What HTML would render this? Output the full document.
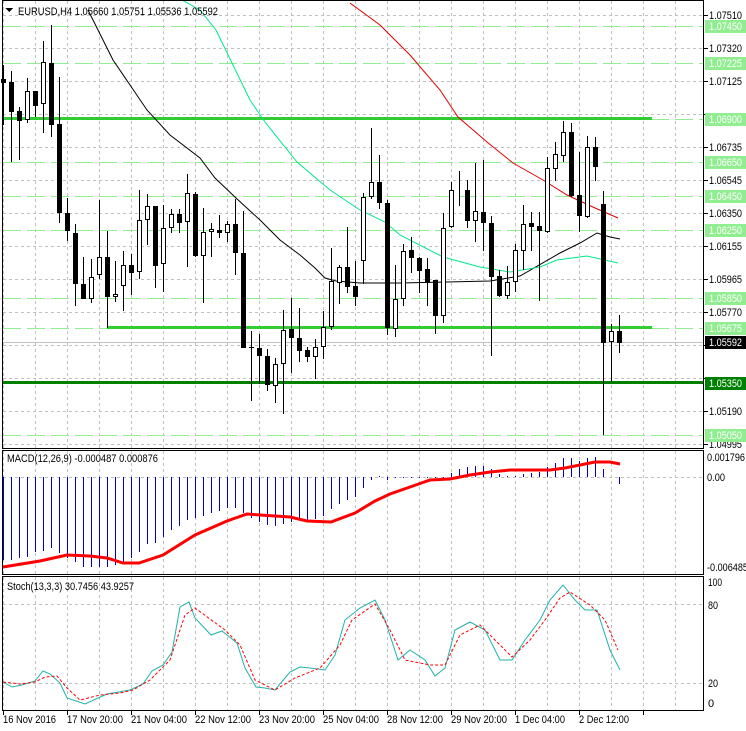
<!DOCTYPE html>
<html><head><meta charset="utf-8">
<style>
html,body{margin:0;padding:0;background:#fff;}
body{width:746px;height:731px;overflow:hidden;}
svg{display:block;}
text{font-family:"Liberation Sans","DejaVu Sans",sans-serif;font-size:11px;fill:#000;}
</style></head><body>
<svg id="s" width="746" height="731" viewBox="0 0 746 731" xmlns="http://www.w3.org/2000/svg" shape-rendering="crispEdges">
<g id="grid"></g>
<g id="lv"></g>
<g id="ma" shape-rendering="auto" fill="none">
<polyline stroke="#000" stroke-width="1" points="88,10 113,60 130,85 147,110 170,135 200,158 215,178 236,198 260,220 280,240 300,255 315,268 325,278 336,281 360,283 400,283 447,282 490,281 520,276 560,253 580,243 597,233 610,237 620,239"/>
<polyline stroke="#00e88a" stroke-width="1" points="182,0 200,10 216,30 250,100 265,122 297,162 330,190 360,210 385,222 400,235 443,257 480,267 510,272 540,267 557,260 587,256 618,263"/>
<polyline stroke="#e00000" stroke-width="1" points="350,3 380,25 410,55 440,90 458,117 487,142 513,163 543,180 567,195 595,208 618,218"/>
</g>
<g id="cd"></g>
<g id="mc"></g>
<g shape-rendering="auto" fill="none">
<polyline stroke="#ff0000" stroke-width="3" points="3,567 40,561 67,555 90,556 107,558 123,563 139,563 163,555 195,535 227,521 247,514 260,515 290,517 307,521 331,522 355,513 375,501 390,494 410,487 430,480 450,479 470,475 490,472 510,470 550,470 565,468 580,465 595,462 610,462 620,464"/>
<polyline stroke="#20b2aa" stroke-width="1" points="3,682 12,687 22,685 35,681 43,671 50,674 60,683 67,698 85,704 107,694 130,690 143,684 152,671 163,665 172,652 180,607 189,602 195,618 211,635 222,631 237,643 245,668 256,687 265,688 275,690 290,672 300,667 310,668 325,670 335,655 345,620 360,608 375,600 385,620 398,660 410,650 425,660 435,676 445,668 455,630 470,622 485,630 500,660 512,660 525,640 540,620 550,600 563,585 575,600 585,610 597,610 610,650 620,670"/>
<polyline stroke="#ff0000" stroke-width="1" stroke-dasharray="3,2" points="3,682 20,684 35,682 45,677 57,676 67,688 80,700 100,695 120,693 133,690 150,680 170,660 185,615 195,608 225,630 240,645 255,680 275,690 295,678 320,668 340,645 352,620 375,604 390,630 405,660 430,665 445,665 460,635 480,625 500,645 512,657 530,640 545,620 560,598 570,592 590,605 605,620 618,650"/>
</g>
<g fill="none" stroke="#000" stroke-width="1">
<rect x="2.5" y="0.5" width="701" height="448"/>
<rect x="2.5" y="450.5" width="701" height="124"/>
<rect x="2.5" y="576.5" width="701" height="134"/>
</g>
<g id="ax"></g>
<path d="M5,8 L13,8 L9,12 Z" fill="#000"/>
<text x="18" y="15" textLength="200" lengthAdjust="spacingAndGlyphs">EURUSD,H4  1.05660 1.05751 1.05536 1.05592</text>
<text x="7" y="462" textLength="151" lengthAdjust="spacingAndGlyphs">MACD(12,26,9) -0.000487 0.000876</text>
<text x="7" y="590" textLength="127" lengthAdjust="spacingAndGlyphs">Stoch(13,3,3) 30.7456 43.9257</text>
<g>
<text x="707" y="461" textLength="38" lengthAdjust="spacingAndGlyphs">0.001796</text>
<text x="707" y="481" textLength="18" lengthAdjust="spacingAndGlyphs">0.00</text>
<text x="707" y="571" textLength="41" lengthAdjust="spacingAndGlyphs">-0.006485</text>
<text x="708" y="586" textLength="14" lengthAdjust="spacingAndGlyphs">100</text>
<text x="708" y="609" textLength="10" lengthAdjust="spacingAndGlyphs">80</text>
<text x="708" y="687" textLength="10" lengthAdjust="spacingAndGlyphs">20</text>
<text x="708" y="707">0</text>
<text x="3" y="723" textLength="53" lengthAdjust="spacingAndGlyphs">16 Nov 2016</text>
<text x="67" y="723" textLength="56" lengthAdjust="spacingAndGlyphs">17 Nov 20:00</text>
<text x="131" y="723" textLength="56" lengthAdjust="spacingAndGlyphs">21 Nov 04:00</text>
<text x="195" y="723" textLength="56" lengthAdjust="spacingAndGlyphs">22 Nov 12:00</text>
<text x="259" y="723" textLength="56" lengthAdjust="spacingAndGlyphs">23 Nov 20:00</text>
<text x="323" y="723" textLength="56" lengthAdjust="spacingAndGlyphs">25 Nov 04:00</text>
<text x="387" y="723" textLength="56" lengthAdjust="spacingAndGlyphs">28 Nov 12:00</text>
<text x="451" y="723" textLength="56" lengthAdjust="spacingAndGlyphs">29 Nov 20:00</text>
<text x="515" y="723" textLength="50" lengthAdjust="spacingAndGlyphs">1 Dec 04:00</text>
<text x="579" y="723" textLength="50" lengthAdjust="spacingAndGlyphs">2 Dec 12:00</text>
</g>
<g id="plbl">
<text x="709" y="19" textLength="33" lengthAdjust="spacingAndGlyphs">1.07510</text>
<text x="709" y="52" textLength="33" lengthAdjust="spacingAndGlyphs">1.07320</text>
<text x="709" y="85" textLength="33" lengthAdjust="spacingAndGlyphs">1.07125</text>
<text x="709" y="151" textLength="33" lengthAdjust="spacingAndGlyphs">1.06735</text>
<text x="709" y="184" textLength="33" lengthAdjust="spacingAndGlyphs">1.06545</text>
<text x="709" y="217" textLength="33" lengthAdjust="spacingAndGlyphs">1.06350</text>
<text x="709" y="250" textLength="33" lengthAdjust="spacingAndGlyphs">1.06155</text>
<text x="709" y="283" textLength="33" lengthAdjust="spacingAndGlyphs">1.05965</text>
<text x="709" y="316" textLength="33" lengthAdjust="spacingAndGlyphs">1.05770</text>
<text x="709" y="415" textLength="33" lengthAdjust="spacingAndGlyphs">1.05190</text>
<text x="709" y="448" textLength="33" lengthAdjust="spacingAndGlyphs">1.04995</text>
</g>
<g id="tags"></g>
</svg>
<script>
var NS="http://www.w3.org/2000/svg";
function el(p,t,a,txt){var e=document.createElementNS(NS,t);for(var k in a)e.setAttribute(k,a[k]);if(txt!==undefined)e.textContent=txt;document.getElementById(p).appendChild(e);return e;}
for(var k=0;k<14;k++){var y=15+33*k+0.5;el("grid","line",{x1:3,x2:703,y1:y,y2:y,stroke:"#c0c0c0","stroke-dasharray":"3,3"});}
for(var k=0;k<22;k++){var x=3+32*k+0.5;
 el("grid","line",{x1:x,x2:x,y1:1,y2:448,stroke:"#c0c0c0","stroke-dasharray":"3,3"});
 el("grid","line",{x1:x,x2:x,y1:451,y2:574,stroke:"#c0c0c0","stroke-dasharray":"3,3"});
 el("grid","line",{x1:x,x2:x,y1:577,y2:710,stroke:"#c0c0c0","stroke-dasharray":"3,3"});
 if(k%2==0)el("grid","line",{x1:x,x2:x,y1:711,y2:715,stroke:"#000"});
}
el("grid","line",{x1:3,x2:703,y1:477.5,y2:477.5,stroke:"#c0c0c0","stroke-dasharray":"3,3"});
el("grid","line",{x1:3,x2:703,y1:604.5,y2:604.5,stroke:"#c0c0c0","stroke-dasharray":"3,3"});
el("grid","line",{x1:3,x2:703,y1:683.5,y2:683.5,stroke:"#c0c0c0","stroke-dasharray":"3,3"});
[26,63,162,196,230,298,328,435,119].forEach(function(y){el("lv","line",{x1:3,x2:703,y1:y+0.5,y2:y+0.5,stroke:"#90ee90","stroke-dasharray":"18,6"});});
el("lv","line",{x1:3,x2:703,y1:342.5,y2:342.5,stroke:"#c0c0c0"});
el("lv","rect",{x:3,y:117,width:649,height:3,fill:"#32cd32"});
el("lv","rect",{x:107,y:326,width:545,height:3,fill:"#32cd32"});
el("lv","rect",{x:3,y:381,width:700,height:3,fill:"#008000"});
var C=[[65,125,79,83,0],[71,162,82,112,0],[107,160,111,121,0],[78,123,91,120,1],[91,117,91,106,0],[41,133,62,104,1],[25,137,63,125,0],[77,223,124,213,0],[198,241,213,231,0],[224,306,233,284,0],[257,299,284,299,0],[259,303,277,299,1],[200,279,257,275,1],[231,328,257,297,0],[261,302,294,297,1],[251,311,265,286,1],[254,295,265,273,0],[190,279,220,272,1],[194,245,206,220,1],[206,288,206,266,0],[205,292,228,264,1],[209,233,214,228,1],[209,233,214,223,0],[174,267,193,222,1],[192,257,194,256,0],[208,303,232,256,1],[223,257,229,232,1],[215,238,230,233,0],[221,242,224,233,1],[199,275,224,253,0],[211,347,253,348,0],[331,401,347,348,0],[334,384,348,356,0],[349,391,356,385,0],[358,403,364,386,1],[310,414,330,364,1],[298,373,329,338,0],[308,362,338,351,0],[347,362,350,357,0],[339,379,347,357,1],[311,359,327,347,1],[248,330,281,327,1],[265,304,267,283,1],[227,293,267,287,0],[261,306,286,297,0],[193,284,197,261,1],[128,199,182,197,1],[155,209,182,203,0],[200,335,203,328,0],[265,337,299,329,1],[244,306,251,299,1],[237,273,250,258,0],[257,293,258,271,0],[258,306,269,282,0],[280,334,280,316,0],[213,323,228,316,1],[182,228,190,227,1],[171,206,190,191,1],[180,228,190,221,0],[163,242,211,221,1],[160,251,212,223,0],[216,356,223,277,0],[270,297,276,296,0],[266,299,282,296,1],[244,292,250,282,1],[205,270,224,251,1],[212,251,223,227,0],[212,301,226,231,0],[157,233,168,232,1],[142,181,154,169,1],[121,162,132,156,1],[123,197,132,196,0],[152,232,195,216,0],[136,218,147,217,1],[137,181,147,167,0],[191,435,204,343,0],[324,382,331,342,1],[315,353,331,343,0]];
C.forEach(function(c,i){var x=3+8*i;
 el("cd","rect",{x:x,y:c[0],width:1,height:c[1]-c[0],fill:"#000"});
 var h=Math.max(c[3]-c[2],1);
 if(c[4]){el("cd","rect",{x:x-1.5,y:c[2]+0.5,width:4,height:Math.max(h-1,0),fill:"#fff",stroke:"#000"});}
 else el("cd","rect",{x:x-2,y:c[2],width:5,height:h,fill:"#000"});
});
var M=[560,560,558,557,552,551,548,553,558,562,567,567,567,567,565,562,558,552,544,543,537,530,526,520,518,516,513,511,508,508,513,518,522,525,526,524,522,520,520,519,516,509,504,500,497,488,480,476,480,478,478,478,478,478,478,478,473,469,467,466,466,469,474,476,476,474,473,472,467,463,458,458,461,458,457,469,477,484];
M.forEach(function(y,i){var x=3+8*i;var a=Math.min(477,y),b=Math.max(477,y);if(b-a<1)return;el("mc","rect",{x:x,y:a,width:1,height:b-a,fill:"#0000cd"});});
[15,48,81,114,147,180,213,246,279,312,345,378,411,444].forEach(function(y){el("ax","line",{x1:704,x2:708,y1:y+0.5,y2:y+0.5,stroke:"#000"});});
function tag(y,t,bg,fg){el("tags","rect",{x:705,y:y-6,width:41,height:13,fill:bg});el("tags","text",{x:709,y:y+4,style:"fill:"+fg,textLength:33,lengthAdjust:"spacingAndGlyphs"},t);}
tag(26,"1.07450","#90ee90","#fff");tag(63,"1.07225","#90ee90","#fff");tag(119,"1.06900","#90ee90","#fff");
tag(162,"1.06650","#90ee90","#fff");tag(196,"1.06450","#90ee90","#fff");tag(230,"1.06250","#90ee90","#fff");
tag(298,"1.05850","#90ee90","#fff");tag(328,"1.05675","#90ee90","#fff");tag(342,"1.05592","#000","#fff");
tag(383,"1.05350","#008000","#fff");tag(435,"1.05050","#90ee90","#fff");
</script>
</body></html>
